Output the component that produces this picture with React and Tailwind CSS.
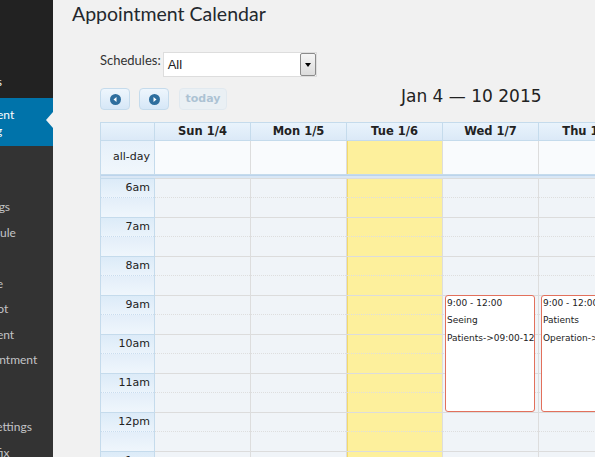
import { Fragment } from 'react';

const days = ['Sun 1/4', 'Mon 1/5', 'Tue 1/6', 'Wed 1/7', 'Thu 1/8', 'Fri 1/9', 'Sat 1/10'];
const hours = ['6am', '7am', '8am', '9am', '10am', '11am', '12pm', '1pm'];

const events = {
  3: { time: '9:00 - 12:00', title: 'Seeing Patients->09:00-12:00' },
  4: { time: '9:00 - 12:00', title: 'Patients Operation->09:00-12:00' },
};

const submenu = [
  ['Settings'],
  ['Schedule'],
  ['Users'],
  ['Notice'],
  ['My Slot'],
  ['Payment'],
  ['Appointment'],
  ['Help'],
  ['Email', 'API Settings'],
  ['Date fix'],
];

const Sidebar = () => (
  <aside className="flex w-[53px] shrink-0 flex-col overflow-hidden font-['Lato',sans-serif] text-[12px]">
    <div className="flex h-[98px] shrink-0 flex-col justify-end bg-[#222] pb-[8px]">
      <div className="-ml-[55px] whitespace-nowrap leading-[16px] text-[#eee]">Comments</div>
    </div>
    <div className="relative h-[48px] shrink-0 bg-[#0073aa] pt-[9px] text-white">
      <div className="-ml-[55px] whitespace-nowrap leading-[16px]">
        Appointment
        <br />
        Scheduling
      </div>
      <span className="absolute right-0 top-[14px] h-0 w-0 border-y-[8px] border-r-[7px] border-y-transparent border-r-[#f1f1f1]" />
    </div>
    <ul className="min-h-0 flex-1 overflow-hidden bg-[#333] pt-[48px] text-[#c3c4c7]">
      {submenu.map((lines) =>
        lines.length > 1 ? (
          <li key={lines[0]} className="-ml-[32px] whitespace-nowrap py-[4.75px] leading-[16px]">
            {lines[0]}
            <br />
            {lines[1]}
          </li>
        ) : (
          <li key={lines[0]} className="-ml-[32px] whitespace-nowrap leading-[25.5px]">
            {lines[0]}
          </li>
        )
      )}
    </ul>
  </aside>
);

const NavIcon = ({ dir }) => (
  <svg width="11" height="11" viewBox="0 0 11 11">
    <circle cx="5.5" cy="5.5" r="5.5" fill="#2e6e9e" />
    {dir === 'prev' ? (
      <polygon points="3.5,5.5 6.5,3 6.5,8" fill="#fff" />
    ) : (
      <polygon points="7.5,5.5 4.5,3 4.5,8" fill="#fff" />
    )}
  </svg>
);

const SlotColumn = ({ today, event }) => (
  <div
    className={
      today
        ? 'relative w-[96px] shrink-0 border-r border-[#ddd] bg-[#fdf09c] shadow-[inset_1px_0_0_#f5da6a]'
        : 'relative w-[96px] shrink-0 border-r border-[#ddd] bg-[#f0f4f8]'
    }
  >
    {hours.map((h) => (
      <Fragment key={h}>
        <div className="h-[19px] border-t border-[#dcdcdc]" />
        <div className="h-[20px] border-t border-dotted border-[#dedede]" />
      </Fragment>
    ))}
    {event && (
      <div className="absolute left-[2px] right-[3px] top-[117px] h-[117px] overflow-hidden rounded-[3px] border border-[#e2705c] bg-white pl-[1px] text-[9px] text-[#222]">
        <div className="whitespace-nowrap leading-[14px]">{event.time}</div>
        <div className="mt-[2px] leading-[17.5px]">
          {event.title.split(' ').map((w, i) => (
            <Fragment key={w}>
              {i > 0 && ' '}
              <span className="whitespace-nowrap">{w}</span>
            </Fragment>
          ))}
        </div>
      </div>
    )}
  </div>
);

const Calendar = () => (
  <div className="w-[727px] shrink-0 border-l border-t border-[#c5dbec] font-['DejaVu_Sans',sans-serif] text-[#222]">
    {/* day headers */}
    <div className="flex h-[18px] border-b border-[#c5dbec] bg-linear-to-b from-[#e9f3fc] to-[#dbe9f7]">
      <div className="w-[54px] shrink-0 border-r border-[#c5dbec]" />
      {days.map((d) => (
        <div
          key={d}
          className="w-[96px] shrink-0 border-r border-[#c5dbec] text-center text-[11.5px] font-bold leading-[17px]"
        >
          {d}
        </div>
      ))}
    </div>

    {/* all-day row */}
    <div className="flex h-[34px] border-b border-[#c5dbec]">
      <div className="flex w-[54px] shrink-0 items-center justify-end border-r border-[#c5dbec] bg-linear-to-b from-[#e6f0fa] to-[#f1f7fc] pr-[4px] text-[11px]">
        all-day
      </div>
      {days.map((d, i) => (
        <div
          key={d}
          className={
            i === 2
              ? 'w-[96px] shrink-0 border-r border-[#ddd] bg-[#fdf09c] shadow-[inset_1px_0_0_#f5da6a]'
              : 'w-[96px] shrink-0 border-r border-[#ddd] bg-[#f9fbfd]'
          }
        />
      ))}
    </div>

    <div className="h-[3px] border-t border-[#bcd4ec] bg-[#d9e7f5]" />

    {/* time grid */}
    <div className="flex">
      <div className="w-[54px] shrink-0 border-r border-[#c5dbec] text-[11px]">
        {hours.map((h) => (
          <Fragment key={h}>
            <div className="h-[19px] border-t border-[#c5dbec] bg-linear-to-b from-[#dcebf8] to-[#eaf3fb] pr-[4px] text-right leading-[18px]">
              {h}
            </div>
            <div className="h-[20px] border-t border-dotted border-[#c9dcee] bg-linear-to-b from-[#e3eef9] to-[#eff6fc]" />
          </Fragment>
        ))}
      </div>
      {days.map((d, i) => (
        <SlotColumn key={d} today={i === 2} event={events[i]} />
      ))}
    </div>
  </div>
);

export default function App() {
  return (
    <div className="flex h-[457px] w-[595px] overflow-hidden bg-[#f1f1f1]">
      <Sidebar />

      <main className="min-w-0 flex-1 overflow-hidden pl-[19px]">
        <h1 className="mt-[2px] whitespace-nowrap font-['Lato',sans-serif] text-[19.5px] font-normal leading-[24px] text-[#23282d]">
          Appointment Calendar
        </h1>

        <div className="pl-[28px]">
          {/* schedule filter */}
          <div className="mt-[26px] flex items-start">
            <label className="font-['Lato',sans-serif] text-[13px] leading-[16px] text-[#333]">Schedules:</label>
            <div className="ml-[2px] flex h-[25px] w-[154px] items-center border border-[#ddd] bg-white">
              <span className="flex-1 pl-[4px] font-['Liberation_Sans',sans-serif] text-[13px] text-[#222]">All</span>
              <span className="flex h-[23px] w-[16px] items-center justify-center rounded-[2px] border border-[#8a8a8a] bg-linear-to-b from-[#f5f5f5] to-[#dcdcdc]">
                <span className="h-0 w-0 border-x-[3.5px] border-t-[4px] border-x-transparent border-t-black" />
              </span>
            </div>
          </div>

          {/* toolbar */}
          <div className="mt-[11px] flex h-[22px] items-start font-['DejaVu_Sans',sans-serif]">
            <button className="flex h-[22px] w-[30px] items-center justify-center rounded-[4px] border border-[#c5dbec] bg-linear-to-b from-[#eef6fd] to-[#d6e7f7]">
              <NavIcon dir="prev" />
            </button>
            <button className="ml-[9px] flex h-[22px] w-[30px] items-center justify-center rounded-[4px] border border-[#c5dbec] bg-linear-to-b from-[#eef6fd] to-[#d6e7f7]">
              <NavIcon dir="next" />
            </button>
            <button className="ml-[10px] h-[22px] w-[48px] rounded-[4px] border border-[#c5dbec] bg-[#dfeffc] text-[11px] font-bold text-[#2e6e9e] opacity-35">
              today
            </button>
            <h2 className="-mt-[2px] ml-[174px] whitespace-nowrap text-[17px] leading-[20px] text-[#222]">
              Jan 4 — 10 2015
            </h2>
          </div>

          <div className="mt-[12px]">
            <Calendar />
          </div>
        </div>
      </main>
    </div>
  );
}
